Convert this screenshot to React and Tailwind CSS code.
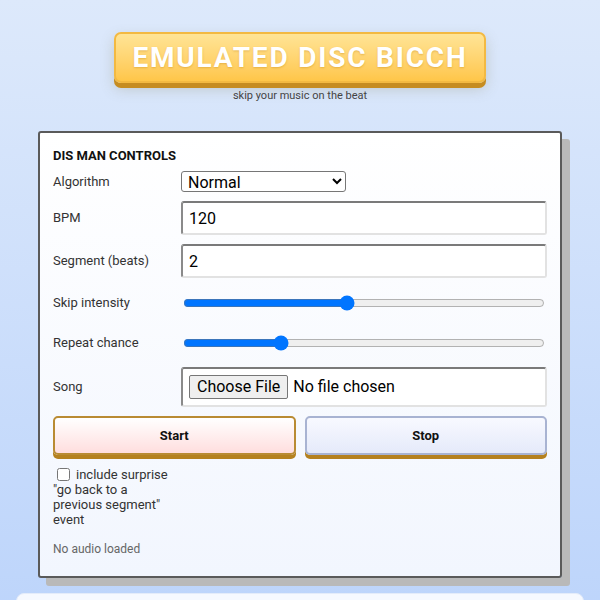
import React from "react";

export default function App() {
  return (
    <div className="min-h-screen bg-gradient-to-b from-[#dde9fb] to-[#bcd4fb] px-4 pt-8 font-['Roboto',sans-serif] text-[#222]">
      <div className="flex flex-col items-center">
        <div className="flex h-[51px] w-[372px] items-center justify-center rounded-[7px] border-2 border-[#f3b941] bg-gradient-to-b from-[#ffe495] to-[#ffc648] text-[28px] font-bold tracking-[1.8px] text-white shadow-[0_5px_0_#c68c20,0_6px_14px_rgba(120,110,60,0.25)] [text-shadow:0_1px_2px_rgba(200,140,30,0.45)]">
          EMULATED DISC BICCH
        </div>
        <div className="mt-[6px] text-[11px] leading-[14px] text-[#444]">skip your music on the beat</div>
      </div>

      <div className="ml-[22px] mr-[22px] mt-[28px] rounded-[3px] border-2 border-[#5a5a5a] bg-gradient-to-b from-white to-[#f2f6fe] px-[13px] pb-[19px] pt-[15px] shadow-[8px_8px_0_#b9b9b9]">
        <div className="mb-[7px] text-[13px] font-bold leading-[16px] text-[#111]">DIS MAN CONTROLS</div>

        <div className="grid grid-cols-[128px_1fr] gap-y-[9px] text-[13px] text-[#333]">
          <div className="flex h-[21px] items-center">Algorithm</div>
          <div className="flex h-[21px] items-center">
            <select
              defaultValue="normal"
              className="h-[21px] w-[165px] rounded-[3px] border border-[#767676] bg-white pl-[2px] text-[16px] leading-[19px] text-black"
            >
              <option value="normal">Normal</option>
              <option value="chaos">Chaos</option>
            </select>
          </div>

          <div className="flex h-[34px] items-center">BPM</div>
          <input
            defaultValue="120"
            className="h-[34px] w-full rounded-[3px] border-2 border-b-[#e2e2e2] border-l-[#8a8a8a] border-r-[#e2e2e2] border-t-[#7a7a7a] bg-white px-[6px] text-[16px] text-black outline-none"
          />

          <div className="flex h-[34px] items-center">Segment (beats)</div>
          <input
            defaultValue="2"
            className="h-[34px] w-full rounded-[3px] border-2 border-b-[#e2e2e2] border-l-[#8a8a8a] border-r-[#e2e2e2] border-t-[#7a7a7a] bg-white px-[6px] text-[16px] text-black outline-none"
          />

          <div className="flex h-[31px] items-center">Skip intensity</div>
          <div className="flex h-[31px] items-center">
            <input type="range" min="0" max="100" defaultValue="45" className="mx-[2px] w-[calc(100%-4px)]" />
          </div>

          <div className="flex h-[31px] items-center">Repeat chance</div>
          <div className="flex h-[31px] items-center">
            <input type="range" min="0" max="100" defaultValue="26" className="mx-[2px] w-[calc(100%-4px)]" />
          </div>

          <div className="flex h-[40px] items-center">Song</div>
          <div className="flex h-[40px] items-center rounded-[3px] border-2 border-b-[#e2e2e2] border-l-[#8a8a8a] border-r-[#e2e2e2] border-t-[#7a7a7a] bg-white px-[6px] text-[16px] text-black">
            <button className="h-[24px] rounded-[2px] border border-[#767676] bg-[#efefef] px-[7px] leading-[20px]">
              Choose File
            </button>
            <span className="ml-[5px]">No file chosen</span>
          </div>
        </div>

        <div className="mt-[9px] flex gap-[9px]">
          <button className="h-[39px] flex-1 rounded-[5px] border-2 border-[#b98b33] bg-gradient-to-b from-white to-[#ffdede] text-[13px] font-bold text-[#111] shadow-[0_4px_0_#b5811f]">
            Start
          </button>
          <button className="h-[39px] flex-1 rounded-[5px] border-2 border-[#a8b3d2] bg-gradient-to-b from-[#f8f9ff] to-[#e5eafa] text-[13px] font-bold text-[#111] shadow-[0_4px_0_#b5811f]">
            Stop
          </button>
        </div>

        <label className="mt-[12px] block w-[118px] text-[13px] leading-[15px] text-[#333]">
          <input type="checkbox" className="ml-[4px] mr-[6px] h-[13px] w-[13px] align-[-2px]" />
          include surprise "go back to a previous segment" event
        </label>

        <div className="mt-[14px] text-[12px] leading-[16px] text-[#666]">No audio loaded</div>
      </div>

      <div className="mt-[15px] h-[40px] rounded-t-[8px] border border-[#e4ecfa] bg-[#f6f9ff]"></div>
    </div>
  );
}
